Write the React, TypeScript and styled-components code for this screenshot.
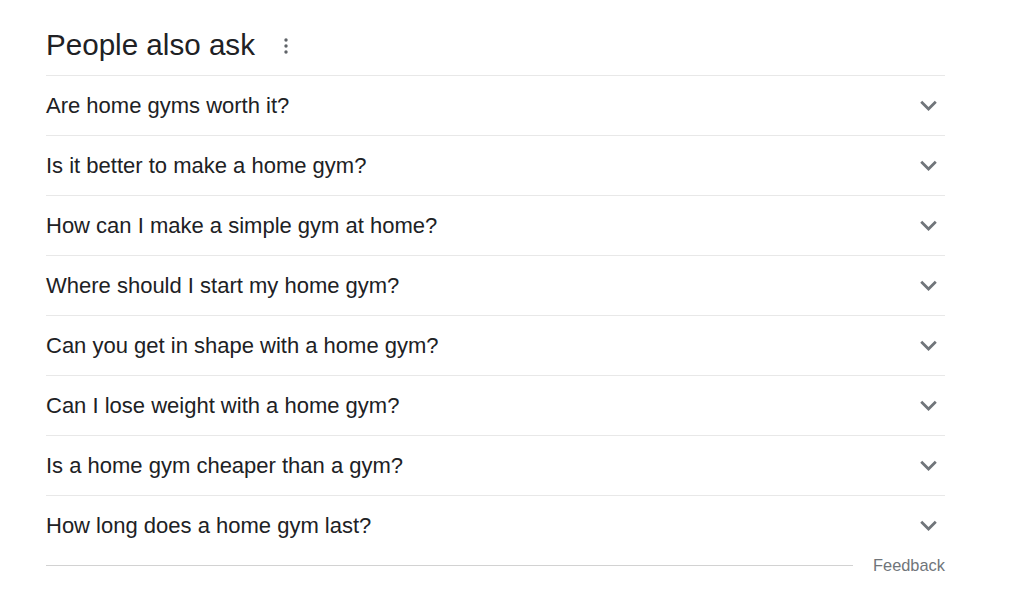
import React from "react";
import styled, { createGlobalStyle } from "styled-components";

const GlobalStyle = createGlobalStyle`
  body {
    margin: 0;
    background: #fff;
    font-family: "Liberation Sans", Arial, sans-serif;
  }
`;

const Page = styled.div`
  padding: 0 79px 0 46px;
  width: 899px;
`;

const Header = styled.div`
  display: flex;
  align-items: center;
  height: 75px;
  padding-top: 15px;
  box-sizing: border-box;
`;

const Title = styled.h2`
  margin: 0;
  font-size: 29.6px;
  font-weight: 400;
  color: #202124;
`;

const MoreButton = styled.div`
  margin-left: 28px;
  display: flex;
  align-items: center;
  margin-top: 2px;
`;

const List = styled.div`
  display: flex;
  flex-direction: column;
`;

const Row = styled.div`
  display: flex;
  align-items: center;
  justify-content: space-between;
  height: 60px;
  border-top: 1px solid #e8e8e8;
  box-sizing: border-box;
`;

const Question = styled.span`
  font-size: 22px;
  color: #202124;
`;

const Footer = styled.div`
  display: flex;
  align-items: center;
  gap: 20px;
  height: 20px;
  margin-top: 0;
`;

const Rule = styled.div`
  flex: 1;
  height: 1px;
  background: #d2d2d2;
`;

const FeedbackLink = styled.span`
  font-size: 16.4px;
  color: #70757a;
`;

const questions = [
  "Are home gyms worth it?",
  "Is it better to make a home gym?",
  "How can I make a simple gym at home?",
  "Where should I start my home gym?",
  "Can you get in shape with a home gym?",
  "Can I lose weight with a home gym?",
  "Is a home gym cheaper than a gym?",
  "How long does a home gym last?",
];

const Chevron = () => (
  <svg width="33" height="33" viewBox="0 0 24 24" fill="#70757a">
    <path d="M16.59 8.59L12 13.17 7.41 8.59 6 10l6 6 6-6z" />
  </svg>
);

const Dots = () => (
  <svg width="6" height="18" viewBox="0 0 6 18" fill="#5f6368">
    <circle cx="3" cy="3" r="1.7" />
    <circle cx="3" cy="9" r="1.7" />
    <circle cx="3" cy="15" r="1.7" />
  </svg>
);

const App = () => {
  return (
    <Page>
      <GlobalStyle />
      <Header>
        <Title>People also ask</Title>
        <MoreButton>
          <Dots />
        </MoreButton>
      </Header>
      <List>
        {questions.map((q) => (
          <Row key={q}>
            <Question>{q}</Question>
            <Chevron />
          </Row>
        ))}
      </List>
      <Footer>
        <Rule />
        <FeedbackLink>Feedback</FeedbackLink>
      </Footer>
    </Page>
  );
};

export default App;
